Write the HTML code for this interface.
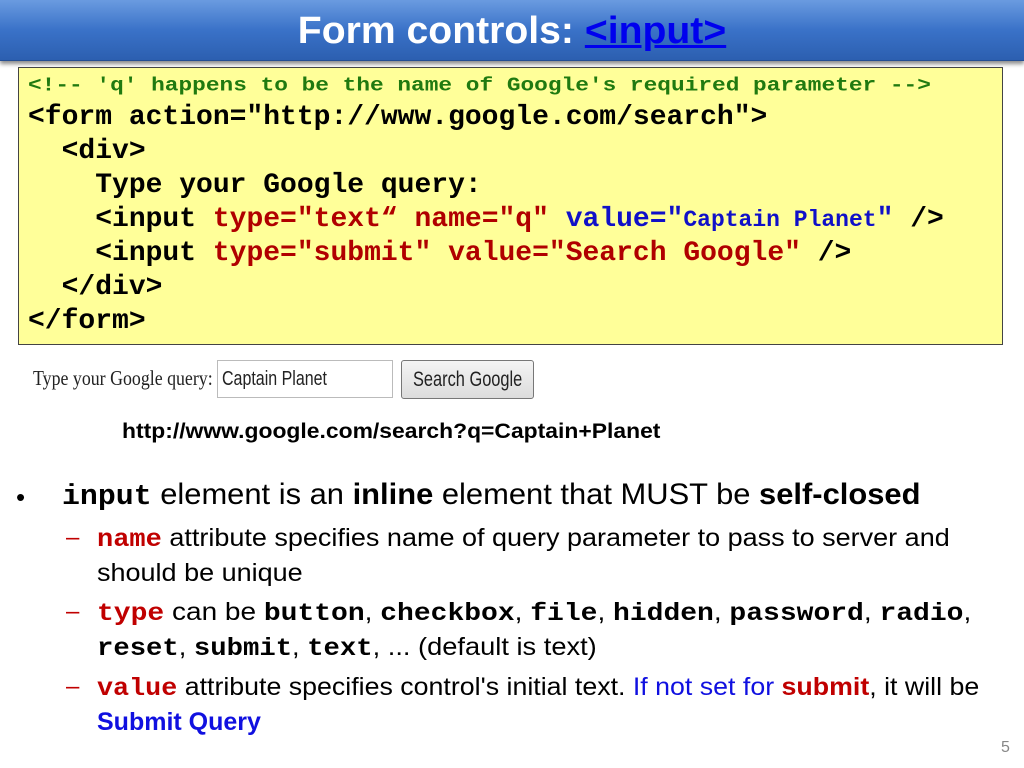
<!DOCTYPE html>
<html><head><meta charset="utf-8"><style>
body{margin:0;width:1024px;height:768px;background:#fff;position:relative;overflow:hidden;font-family:"Liberation Sans",sans-serif}
.t{position:absolute;left:0;top:0;width:1024px;height:60px;background:linear-gradient(#6a9be0,#3a72c8 50%,#2c5fb0);box-shadow:0 3px 4px rgba(0,0,0,.45);border-bottom:1px solid #244e93}
.t div{position:absolute;left:0;right:0;top:10px;text-align:center;color:#fff;font-weight:bold;font-size:38px;transform:scaleX(1.03)}
.t a{color:#0000ee;text-decoration:underline}
.code{position:absolute;left:18px;top:67px;width:985px;height:278px;background:#ffff99;border:1px solid #444;box-sizing:border-box}
.l{position:absolute;left:28px;font-family:"Liberation Mono",monospace;font-weight:bold;font-size:28px;white-space:pre;line-height:1}
.r{color:#b00000}.b{color:#1010c8}
.s{position:absolute;white-space:pre;transform-origin:0 0;line-height:1}
.m{font-family:"Liberation Mono",monospace;font-weight:bold}
.red{color:#c00000;font-weight:bold}
</style></head><body>
<div class="t"><div>Form controls: <a>&lt;input&gt;</a></div></div>
<div class="code"></div>
<div class="l" style="top:76px;font-size:22.8px;color:#207a10;transform:scaleY(.85);transform-origin:0 0">&lt;!-- 'q' happens to be the name of Google's required parameter --&gt;</div>
<div class="l" style="top:104px">&lt;form action="http://www.google.com/search"&gt;</div>
<div class="l" style="top:138px">  &lt;div&gt;</div>
<div class="l" style="top:172px">    Type your Google query:</div>
<div class="l" style="top:206px">    &lt;input <span class="r">type="text“ name="q"</span> <span class="b">value="<span style="font-size:23px">Captain Planet</span>"</span> /&gt;</div>
<div class="l" style="top:240px">    &lt;input <span class="r">type="submit" value="Search Google"</span> /&gt;</div>
<div class="l" style="top:274px">  &lt;/div&gt;</div>
<div class="l" style="top:308px">&lt;/form&gt;</div>

<div class="s" style="left:33px;top:368px;font-family:'Liberation Serif',serif;font-size:21px;color:#222;transform:scaleX(.85)">Type your Google query:</div>
<div style="position:absolute;left:217px;top:360px;width:176px;height:38px;border:1px solid #bbb;box-sizing:border-box;background:#fff"></div>
<div class="s" style="left:222px;top:369px;font-size:20px;color:#222;transform:scaleX(.8)">Captain Planet</div>
<div style="position:absolute;left:401px;top:360px;width:133px;height:39px;border:1px solid #777;border-radius:3px;box-sizing:border-box;background:linear-gradient(#f4f4f4,#dcdcdc)"></div>
<div class="s" style="left:413px;top:369px;font-size:21px;color:#222;transform:scaleX(.78)">Search Google</div>
<div class="s" style="left:122px;top:421px;font-size:21px;font-weight:bold;transform:scaleX(1.09)">http://www.google.com/search?q=Captain+Planet</div>

<div class="s" style="left:16px;top:484px;font-size:26px">•</div>
<div class="s" style="left:62px;top:480px;font-size:30px;transform:scaleX(1.03)"><span class="m" style="font-size:29px">input</span> element is an <b>inline</b> element that MUST be <b>self-closed</b></div>
<div class="s" style="left:66px;top:526px;font-size:24px;color:#c00000">–</div>
<div class="s" style="left:97px;top:526px;font-size:25px;transform:scaleX(1.08)"><span class="m red">name</span> attribute specifies name of query parameter to pass to server and</div>
<div class="s" style="left:97px;top:561px;font-size:25px;transform:scaleX(1.08)">should be unique</div>
<div class="s" style="left:66px;top:600px;font-size:24px;color:#c00000">–</div>
<div class="s" style="left:97px;top:600px;font-size:25px;transform:scaleX(1.12)"><span class="m red">type</span> can be <span class="m">button</span>, <span class="m">checkbox</span>, <span class="m">file</span>, <span class="m">hidden</span>, <span class="m">password</span>, <span class="m">radio</span>,</div>
<div class="s" style="left:97px;top:635px;font-size:25px;transform:scaleX(1.09)"><span class="m">reset</span>, <span class="m">submit</span>, <span class="m">text</span>, ... (default is text)</div>
<div class="s" style="left:66px;top:675px;font-size:24px;color:#c00000">–</div>
<div class="s" style="left:97px;top:675px;font-size:25px;transform:scaleX(1.07)"><span class="m red">value</span> attribute specifies control's initial text. <span style="color:#1010e0">If not set for </span><span class="red">submit</span>, it will be</div>
<div class="s" style="left:97px;top:710px;font-size:25px;font-weight:bold;color:#1010e0;transform:scaleX(1.0)">Submit Query</div>
<div class="s" style="left:1001px;top:740px;font-size:16px;color:#888">5</div>
</body></html>
